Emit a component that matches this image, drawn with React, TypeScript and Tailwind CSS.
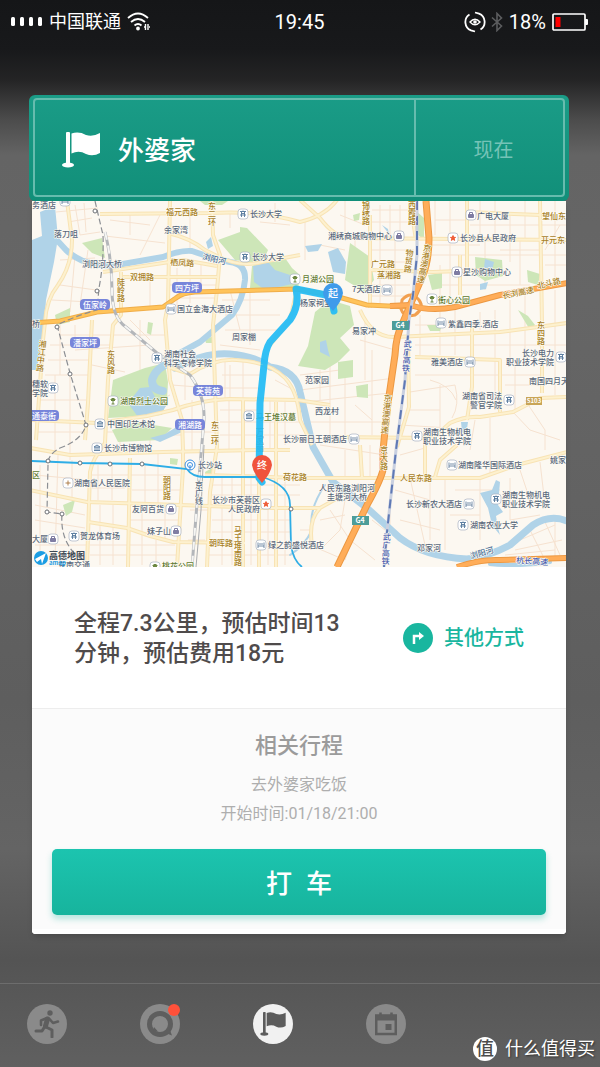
import { FC, ReactNode } from "react";

type Tone = "poi" | "road" | "park" | "water" | "rail";

interface Label {
  x: number;
  y: number;
  text: string;
  tone?: Tone;
  rotate?: number;
}

const toneFill: Record<Tone, string> = {
  poi: "#5a687b",
  road: "#a8801f",
  park: "#5f7a33",
  water: "#4a6f96",
  rail: "#4b5fae",
};

const labels: Label[] = [
  { x: 32, y: 208, text: "务酒店" },
  { x: 54, y: 237, text: "落刀咀" },
  { x: 164, y: 233, text: "余家湾" },
  { x: 250, y: 217, text: "长沙大学" },
  { x: 252, y: 260, text: "长沙大学" },
  { x: 166, y: 215, text: "福元西路", tone: "road" },
  { x: 82, y: 267, text: "浏阳河大桥" },
  { x: 170, y: 265, text: "栖凤路", tone: "road", rotate: 4 },
  { x: 130, y: 280, text: "双拥路", tone: "road" },
  { x: 202, y: 259, text: "浏阳河", tone: "water", rotate: 14 },
  { x: 177, y: 312, text: "国立金海大酒店" },
  { x: 302, y: 282, text: "月湖公园", tone: "park" },
  { x: 300, y: 306, text: "杨家祠堂" },
  { x: 328, y: 239, text: "湘绣商城购物中心" },
  { x: 477, y: 219, text: "广电大厦" },
  { x: 460, y: 241, text: "长沙县人民政府" },
  { x: 542, y: 219, text: "望仙东", tone: "road" },
  { x: 541, y: 243, text: "开元东", tone: "road" },
  { x: 371, y: 267, text: "广元路", tone: "road" },
  { x: 377, y: 278, text: "蒸湘路", tone: "road" },
  { x: 352, y: 292, text: "7天酒店" },
  { x: 463, y: 275, text: "星沙购物中心" },
  { x: 438, y: 303, text: "街心公园", tone: "park" },
  { x: 503, y: 299, text: "长浏高速", tone: "road", rotate: -12 },
  { x: 538, y: 289, text: "北斗路", tone: "road", rotate: -14 },
  { x: 448, y: 327, text: "紫鑫四季.酒店" },
  { x: 352, y: 334, text: "易家冲" },
  { x: 305, y: 383, text: "范家园" },
  { x: 315, y: 414, text: "西龙村" },
  { x: 431, y: 365, text: "雅美酒店" },
  { x: 522, y: 356, text: "长沙电力" },
  { x: 506, y: 365, text: "职业技术学院" },
  { x: 529, y: 384, text: "南国四月天" },
  { x: 462, y: 399, text: "湖南省司法" },
  { x: 470, y: 408, text: "警官学院" },
  { x: 423, y: 435, text: "湖南生物机电" },
  { x: 423, y: 444, text: "职业技术学院" },
  { x: 283, y: 442, text: "长沙丽日王朝酒店" },
  { x: 32, y: 327, text: "桥" },
  { x: 232, y: 340, text: "周家棚" },
  { x: 164, y: 357, text: "湖南社会" },
  { x: 164, y: 366, text: "科学专修学院" },
  { x: 32, y: 387, text: "穗软" },
  { x: 32, y: 396, text: "学院" },
  { x: 120, y: 404, text: "湖南烈士公园", tone: "park" },
  { x: 107, y: 427, text: "中国印艺术馆" },
  { x: 104, y: 451, text: "长沙市博物馆" },
  { x: 256, y: 420, text: "马王堆汉墓", tone: "park" },
  { x: 198, y: 468, text: "长沙站" },
  { x: 74, y: 486, text: "湖南省人民医院" },
  { x: 32, y: 478, text: "区", tone: "park" },
  { x: 283, y: 480, text: "荷花路", tone: "road" },
  { x: 212, y: 503, text: "长沙市芙蓉区" },
  { x: 228, y: 512, text: "人民政府" },
  { x: 132, y: 512, text: "友阿百货" },
  { x: 147, y: 534, text: "妹子山" },
  { x: 80, y: 539, text: "贺龙体育场" },
  { x: 32, y: 542, text: "大厦" },
  { x: 209, y: 546, text: "朝晖路", tone: "road" },
  { x: 268, y: 548, text: "绿之韵盛悦酒店" },
  { x: 162, y: 569, text: "桃花公园", tone: "park" },
  { x: 58, y: 568, text: "东南交通" },
  { x: 458, y: 468, text: "湖南隆华国际酒店" },
  { x: 550, y: 463, text: "姚家" },
  { x: 400, y: 481, text: "人民东路", tone: "road" },
  { x: 319, y: 491, text: "人民东路浏阳河" },
  { x: 327, y: 500, text: "圭塘河大桥" },
  { x: 406, y: 507, text: "长沙新农大酒店" },
  { x: 502, y: 498, text: "湖南生物机电" },
  { x: 502, y: 507, text: "职业技术学院" },
  { x: 470, y: 528, text: "湖南农业大学" },
  { x: 417, y: 551, text: "邓家河" },
  { x: 471, y: 559, text: "浏阳河", tone: "water", rotate: -16 },
  { x: 516, y: 563, text: "杭长高速", tone: "rail", rotate: 4 },
];

// street names that run down the road
const columns: Label[] = [
  { text: "东二环", x: 212, y: 202 },
  { text: "陡岭路", x: 121, y: 278 },
  { text: "锦绣路", x: 366, y: 201 },
  { text: "西霞路", x: 412, y: 201 },
  { text: "物贸路", x: 410, y: 249, rotate: 6 },
  { text: "京港澳高速", x: 428, y: 244, rotate: 11 },
  { text: "湘江中路", x: 43, y: 340, rotate: 6 },
  { text: "东风路", x: 111, y: 350 },
  { text: "东二环", x: 215, y: 421 },
  { text: "东四路", x: 541, y: 321 },
  { text: "武广高铁", x: 408, y: 340, rotate: 4, tone: "rail" },
  { text: "京港澳高速", x: 388, y: 394, rotate: 5 },
  { text: "京大路", x: 384, y: 446 },
  { text: "朝阳路", x: 167, y: 476 },
  { text: "京广线", x: 199, y: 481, tone: "poi" },
  { text: "马王堆南路", x: 238, y: 526 },
  { text: "武广高铁", x: 387, y: 533, rotate: 3, tone: "rail" },
  { text: "万家丽", x: 260, y: 428 },
];

const districts = [
  { x: 187, y: 288, text: "四方坪" },
  { x: 95, y: 305, text: "伍家岭" },
  { x: 85, y: 343, text: "潘家坪" },
  { x: 208, y: 391, text: "芙蓉苑" },
  { x: 190, y: 425, text: "湘湖路" },
  { x: 44, y: 416, text: "通泰街" },
];

type Kind = "school" | "bed" | "tree" | "shop" | "star" | "museum" | "cross";

const pois: { x: number; y: number; kind: Kind }[] = [
  { x: 243, y: 214, kind: "school" },
  { x: 245, y: 257, kind: "school" },
  { x: 65, y: 201, kind: "bed" },
  { x: 171, y: 309, kind: "bed" },
  { x: 295, y: 279, kind: "tree" },
  { x: 399, y: 236, kind: "shop" },
  { x: 471, y: 215, kind: "shop" },
  { x: 453, y: 238, kind: "star" },
  { x: 457, y: 272, kind: "shop" },
  { x: 387, y: 290, kind: "bed" },
  { x: 432, y: 299, kind: "tree" },
  { x: 441, y: 323, kind: "bed" },
  { x: 157, y: 358, kind: "school" },
  { x: 53, y: 388, kind: "school" },
  { x: 113, y: 401, kind: "tree" },
  { x: 100, y: 424, kind: "museum" },
  { x: 97, y: 448, kind: "museum" },
  { x: 249, y: 416, kind: "museum" },
  { x: 470, y: 362, kind: "bed" },
  { x: 561, y: 357, kind: "school" },
  { x: 509, y: 400, kind: "school" },
  { x: 417, y: 436, kind: "school" },
  { x: 354, y: 439, kind: "bed" },
  { x: 68, y: 483, kind: "cross" },
  { x: 266, y: 504, kind: "star" },
  { x: 171, y: 509, kind: "shop" },
  { x: 176, y: 531, kind: "shop" },
  { x: 74, y: 536, kind: "school" },
  { x: 53, y: 539, kind: "shop" },
  { x: 261, y: 545, kind: "bed" },
  { x: 155, y: 567, kind: "tree" },
  { x: 452, y: 465, kind: "bed" },
  { x: 469, y: 504, kind: "bed" },
  { x: 496, y: 499, kind: "school" },
  { x: 463, y: 525, kind: "school" },
];

const kindPath: Record<Kind, string> = {
  school: "M-3 -2.5H3M-2 -.5H2M-3 1H3M-1.5 -2.5V3M1.5 -2.5V3M0 -3.5V-2",
  bed: "M-3 -2.5V3M3 -2.5V3M-3 1H3M-2 -1H2",
  tree: "M0 0V3M-1.5 3H1.5M-2.5 -1.5H2.5M-2 -.5H2M-1.5 -2.5H1.5",
  shop: "M-2.5 -.5H2.5V2.5H-2.5ZM-2 .5H2M-2 1.5H2M-1.5 -.5V-2.5H1.5V-.5",
  star: "M0 -2.5L.8 -.7L2.6 -.6L1.2 .6L1.7 2.4L0 1.4L-1.7 2.4L-1.2 .6L-2.6 -.6L-.8 -.7Z",
  museum: "M-3 -1L0 -3L3 -1ZM-2 -1V2M0 -1V2M2 -1V2M-3 2.5H3",
  cross: "M0 -2.5V2.5M-2.5 0H2.5",
};

const kindColor: Record<Kind, string> = {
  school: "#56789c",
  bed: "#66819f",
  tree: "#5b7a2c",
  shop: "#716e98",
  star: "#ee5a35",
  museum: "#56789c",
  cross: "#a8743c",
};

const mainRoads = [
  "M100 214L210 213Q260 210 300 222Q325 216 337 200",
  "M300 200L320 218Q335 238 350 238L567 240",
  "M170 201L168 305L165 320L170 380L182 420L183 450V468L177 567",
  "M212 201L213 235L220 255L217 290L213 325L217 447L210 492L207 567",
  "M103 272L163 263L183 260L217 266",
  "M123 277H217",
  "M168 233Q190 238 205 250L217 256Q240 268 262 262L300 255",
  "M67 201L72 240Q72 265 58 285Q46 300 45 322L43 340L40 385L36 440",
  "M121 272V315L113 325L108 380L105 443Q92 460 90 472L87 567",
  "M92 320L88 403L85 440",
  "M30 420L97 423L147 416L173 410Q200 400 230 399L297 400L330 405",
  "M168 367L190 374Q215 358 237 360Q270 362 285 378Q298 392 300 420L312 445",
  "M30 490L87 502L180 505L260 508L320 508L345 494",
  "M30 448L70 455L163 452L257 450L290 450",
  "M130 458L128 567",
  "M88 522L127 528L150 536L173 542L245 543",
  "M205 475L300 478L480 478L517 465L567 452",
  "M243 400V567",
  "M259 478V567",
  "M276 402V567",
  "M360 445L362 478",
  "M425 430V475",
  "M457 445L440 460L435 477",
  "M408 340L409 407L397 447",
  "M330 437L433 438L450 423Q465 416 480 417L513 412L540 398L567 397",
  "M415 357L500 360V412",
  "M472 325V387L467 420",
  "M540 201L542 325V393",
  "M460 255V295",
  "M360 310Q372 338 395 337L500 332L567 323",
  "M370 215V308",
  "M410 201L416 240",
  "M370 270L433 272L487 270",
  "M467 201V275M467 212L540 215",
  "M320 508Q308 520 312 545",
  "M297 289L290 320L270 345",
];

const minorRoads = [
  "M75 205L80 235L100 232M68 222L92 218M56 212L98 208M84 203L86 232M60 260L95 258",
  "M60 285L96 290M52 300L90 302M75 255L70 312M88 250L80 305",
  "M140 255L160 215M105 236L165 243M110 220L150 225M130 214V235M190 214V250",
  "M177 268V306M190 262V303M201 264V290M168 285H217M172 298H215M150 277V308",
  "M230 214V228M260 222L290 225M275 203V222M230 290L240 330M250 292V345M225 330H285",
  "M222 300H270M225 315H280M220 345L260 350M60 335H165M75 350L150 345M92 365L125 372",
  "M50 345H110M48 360H90M45 375H88M60 325V375M75 325V345M130 320L150 340M140 320V400",
  "M40 400H86M38 432H84M55 375V450M70 372V460M105 432H180M120 420V455M150 418V452",
  "M170 395L160 400M172 385L210 388M185 375V400M225 360V400M230 365V398M243 362V400",
  "M222 375H260M222 388H258M220 410H258M220 422H300M220 435H300M229 400V452M270 400V452",
  "M285 402V445M192 400V450M172 432H215M150 435H182M275 380L290 388",
  "M40 465V560M58 455L55 560M72 460V500M98 465V500M112 463V500M145 465V503M158 453V503",
  "M92 475H128M92 488H125M130 475H180M132 490H182M35 475L88 480M35 505L85 515",
  "M35 520L85 528M35 545H88M100 505V565M113 505V565M142 508V565M156 540V565M90 545H175M90 555H176",
  "M130 520H180M165 505V540M212 485H300M212 495H300M212 520H290M212 532H290M207 555H295",
  "M222 475V565M232 475V565M251 478V565M268 510V565M285 480V565M190 510H208M188 540H205",
  "M305 220V260M320 245L345 250M340 215L365 225M345 201V240M355 238V250M380 205V238M390 205V238M400 205V240",
  "M372 210H410M372 222H410M372 250H414M372 262H412M372 285H410M372 296H405M380 240V305M395 240V305",
  "M435 201V235M450 201V238M480 201V240M495 201V240M510 216V262M525 201V240M555 201V285",
  "M435 220H465M470 225H567M430 255H567M440 265V300M450 240V300M485 240V290M520 240V285",
  "M430 245H480M500 250H540M435 285H530M545 265H567M545 250L560 225M480 312V330M495 310V400",
  "M420 315V355M440 312V355M455 310V355M510 300V358M525 295V355M555 290V395M415 345H567M415 325H440",
  "M415 375H540M505 385H545M410 392L455 385Q460 405 452 418M430 380Q450 385 456 400M515 362V410",
  "M300 390L395 378M305 402L390 393M300 375L340 370M320 370V400M330 365V435M345 362V437M372 350V435",
  "M310 422H385M355 405L372 420M320 445L385 455M315 330V350M360 340L395 350M365 320V380",
  "M410 410H440M400 425L450 428M440 385V430M475 420L470 450M490 418V475M513 412L530 430L560 440",
  "M525 400L545 430V450M400 455L425 448M335 480L360 500M345 450V478M370 445V478",
  "M430 478V540M445 478V550M455 490H500M450 515H480M480 480V540M395 490L430 500M400 520L440 530M410 478L425 545",
  "M390 500V540M372 520L385 530M345 500L340 530L320 550M330 510L350 540L375 560M310 545L345 560",
  "M320 520L345 515M355 530L345 560M300 530H312M520 470L530 500M510 478V520L540 515M540 462L545 505",
  "M520 540L555 525M530 530L545 560M545 522L560 555M515 550L562 540M505 555L555 550M555 520V560",
];

const greens = [
  "M82 243L102 238L105 258L92 253Z",
  "M218 240L240 232L240 227L247 228L268 250L262 264L235 260Z",
  "M252 266L283 255L292 268L300 275L298 290L250 288Z",
  "M350 243L370 257L374 280L365 292L345 280Z",
  "M315 312L330 300L350 306L354 325L340 338L350 350L338 362L325 370L298 366L308 346Z",
  "M338 362L353 360V377L338 379Z",
  "M356 386L368 384V398L357 397Z",
  "M475 257L502 260L503 276L485 281L476 275Z",
  "M428 275L442 273V288L432 290Z",
  "M113 380L145 368L165 363L168 382L167 400L162 415L108 418Z",
  "M112 430L135 422L172 428L160 440L118 442Z",
  "M200 201H228L222 205H205Z",
  "M527 270L540 274L538 285L528 282Z",
  "M518 310L528 316L535 325L530 330Z",
  "M353 215L360 213L359 220L354 221Z",
  "M415 210L424 218V240L418 235Z",
  "M63 505L75 500L72 512L66 516Z",
  "M170 458L178 459L177 465L170 464Z",
  "M205 472L212 468L213 475L206 476Z",
  "M148 322L153 323L151 335L147 333Z",
  "M205 340L213 336L215 343L206 343Z",
  "M427 325L442 325L440 331L430 331Z",
  "M55 315L70 308V322L57 325Z",
];

const lakes = [
  "M32 240L42 236L40 212L55 206L58 238L54 262L46 300L43 345L36 370H32Z",
  "M253 266L268 262L275 270L290 275L292 284L265 290L254 282Z",
  "M328 252L338 248L346 262L345 274L333 272Z",
  "M206 242L211 237L213 246L208 249Z",
  "M128 403L140 388L150 387L156 399L168 403L160 415L138 417Z",
  "M305 246L322 244L318 251L308 252Z",
  "M320 342L326 340L328 350L330 357L320 352Z",
  "M382 225L388 229L389 234Z",
  "M485 259L494 262L492 271L484 268Z",
  "M480 284L488 282L486 289L480 290Z",
  "M150 438L165 434L180 425L182 432L160 442Z",
  "M461 422H468L466 435L462 432Z",
  "M480 493L492 490L496 480L500 482L498 505L503 512L496 516L498 528L500 535L492 525L488 508Z",
];

const orangeRoad =
  "M32 323L60 321L97 312L163 307L176 298Q182 293 195 292L297 289L335 296L367 305L410 307";
const expressway =
  "M426 201L429 238Q429 260 423 275L403 322Q396 335 395 355L388 403L383 450V470Q380 482 367 505L337 567";
const eastExpressway =
  "M390 306L410 305Q430 312 455 307L500 295L567 283M457 567Q480 559 500 560L567 558";
const highSpeedRail = "M417 201V255L413 295L409 320L405 380L396 450L387 532L384 567";
const railway =
  "M105 232Q112 260 112 290Q112 318 126 327L157 353L190 375Q205 395 204 420L199 478L192 567";

const stops = [
  [95, 211], [97, 291], [57, 327], [70, 374], [86, 425], [47, 512], [62, 514],
  [48, 461], [80, 463], [110, 464], [142, 464], [291, 509],
];

const mapFont = '"Noto Sans CJK SC", "Noto Sans", sans-serif';

const Pin: FC<{ x: number; y: number; fill: string; text: string }> = ({ x, y, fill, text }) => (
  <g>
    <path
      d={`M${x - 10} ${y}A10 10 0 1 1 ${x + 10} ${y}Q${x + 9} ${y + 8} ${x} ${y + 18}Q${x - 9} ${y + 8} ${x - 10} ${y}Z`}
      fill={fill}
    />
    <text x={x} y={y + 4} fontSize="10" fontWeight="500" fill="#fff" textAnchor="middle">
      {text}
    </text>
  </g>
);

const RouteMap = () => (
  <svg
    viewBox="32 201 534 366"
    className="block w-full bg-[#fcf8f1]"
    style={{ fontFamily: mapFont }}
    role="img"
  >
    {/* land and water */}
    {minorRoads.map((d) => (
      <path key={d} d={d} fill="none" stroke="#f6e2d0" strokeWidth="1" />
    ))}
    {greens.map((d) => (
      <path key={d} d={d} fill="#cde6b8" />
    ))}
    {lakes.map((d) => (
      <path key={d} d={d} fill="#b0d3e8" />
    ))}
    <g fill="none" stroke="#b0d3e8" strokeLinejoin="round" strokeLinecap="round">
      <path
        strokeWidth="6"
        d="M55 238L66 250Q85 268 117 265L163 257Q180 250 192 251L210 257L230 262Q246 264 245 280Q243 300 232 315L200 342L180 353"
      />
      <path strokeWidth="8" d="M172 362Q155 368 152 380Q152 390 163 391" />
      <path
        strokeWidth="7"
        d="M175 368Q205 352 230 354Q255 356 270 367Q296 370 300 392L313 447L333 482L367 508L400 538Q425 557 467 559Q490 556 510 545L533 525Q550 514 567 521"
      />
      <path strokeWidth="2" d="M325 485Q308 510 312 530Q305 545 290 555" />
      <path strokeWidth="4" d="M490 564Q520 567 550 562" />
    </g>

    {/* roads */}
    <g fill="none" strokeLinejoin="round">
      {mainRoads.map((d) => (
        <path key={d} d={d} stroke="#f8e3b4" strokeWidth="4" />
      ))}
      {mainRoads.map((d) => (
        <path key={d} d={d} stroke="#fdf1cf" strokeWidth="2" />
      ))}
      <path d={orangeRoad} stroke="#f0ae4a" strokeWidth="5" />
      <path d={orangeRoad} stroke="#ffc35a" strokeWidth="3" />
      <path d={eastExpressway} stroke="#ec9842" strokeWidth="6" />
      <path
        d="M402 300Q411 290 419 300Q425 308 415 315Q404 318 401 309Z"
        stroke="#f2a050"
        strokeWidth="3"
      />
      <path d={expressway} stroke="#ec9842" strokeWidth="7" />
      <path d={eastExpressway} stroke="#ffad59" strokeWidth="4" />
      <path d={expressway} stroke="#ffad59" strokeWidth="5" />
    </g>

    {/* railways */}
    <g fill="none">
      <path d={highSpeedRail} stroke="#c9d0e0" strokeWidth="3" />
      <path d={highSpeedRail} stroke="#5f79b5" strokeWidth="2" strokeDasharray="9 6" />
      <path
        d="M95 201L103 235Q104 262 99 288L97 310Q75 316 57 325L70 373L86 425Q82 440 60 448Q47 455 48 465L47 512L62 514Q60 540 77 556"
        stroke="#8c8f94"
        strokeWidth="1.2"
        strokeDasharray="6 3"
      />
      <path d={railway} stroke="#b3b6ba" strokeWidth="3" />
      <path d={railway} stroke="#f5f5f3" strokeWidth="2" strokeDasharray="8 6" />
      <path d="M204 445L201 510L196 567" stroke="#a9acb0" strokeWidth="1" />
      <path
        d="M32 461L80 463L142 464L187 469Q192 477 205 477H262Q290 485 290 505L291 545Q293 560 302 567"
        stroke="#2eade6"
        strokeWidth="1.8"
      />
    </g>
    {stops.map(([x, y]) => (
      <circle key={`${x}-${y}`} cx={x} cy={y} r="2" fill="#fff" stroke="#6d7075" />
    ))}

    {/* icons of the places */}
    {pois.map((p) => (
      <g key={`${p.x}-${p.y}`} transform={`translate(${p.x} ${p.y})`}>
        <rect x="-5" y="-5" width="10" height="10" rx="3" fill="#fff" stroke="#a9b3c1" strokeWidth=".7" />
        <path
          d={kindPath[p.kind]}
          fill={p.kind === "star" ? kindColor.star : "none"}
          stroke={kindColor[p.kind]}
          strokeWidth=".9"
        />
      </g>
    ))}
    <g fill="none" stroke="#3a8ee0">
      <circle cx="190" cy="465" r="5" fill="#fff" />
      <circle cx="190" cy="465" r="2.5" />
      <path d="M190 465V470" />
    </g>

    {/* names */}
    <g fontSize="8" fontWeight="500" stroke="#fffdf6" strokeWidth="1.2" paintOrder="stroke" strokeLinejoin="round">
      {labels.map((l) => (
        <text
          key={`${l.x}-${l.y}`}
          x={l.x}
          y={l.y}
          fill={toneFill[l.tone || "poi"]}
          transform={l.rotate ? `rotate(${l.rotate} ${l.x} ${l.y})` : undefined}
        >
          {l.text}
        </text>
      ))}
      {columns.map((c) => (
        <text
          key={`${c.x}-${c.y}`}
          x={c.x}
          y={c.y}
          className="[writing-mode:vertical-rl]"
          fill={toneFill[c.tone || "road"]}
          transform={c.rotate ? `rotate(${c.rotate} ${c.x} ${c.y})` : undefined}
        >
          {c.text}
        </text>
      ))}
    </g>
    {districts.map((d) => (
      <g key={d.text}>
        <rect x={d.x - 15} y={d.y - 6} width="30" height="11" rx="4" fill="#7785da" />
        <text x={d.x} y={d.y + 3} fontSize="8" fontWeight="500" fill="#fff" textAnchor="middle">
          {d.text}
        </text>
      </g>
    ))}
    {[
      [400, 326],
      [360, 521],
    ].map(([x, y]) => (
      <g key={x}>
        <rect x={x - 8} y={y - 5} width="17" height="9" fill="#4d9d99" />
        <text x={x} y={y + 2} fontSize="7" fontWeight="700" fill="#fff" textAnchor="middle">
          G4
        </text>
      </g>
    ))}
    <rect x="526" y="397" width="16" height="8" fill="#c9a557" />
    <text x="534" y="403" fontSize="6" fontWeight="700" fill="#fff" textAnchor="middle">
      S103
    </text>

    {/* route */}
    <path
      d="M334 311L331 296L296 289Q300 305 290 320L270 342Q265 350 264 365L260 403L259 478L262 482"
      fill="none"
      stroke="#22bbf5"
      strokeOpacity=".93"
      strokeWidth="7"
      strokeLinejoin="round"
      strokeLinecap="round"
    />
    <Pin x={333} y={293} fill="#3f9bea" text="起" />
    <Pin x={262} y={465} fill="#f0533c" text="终" />

    {/* map logo */}
    <circle cx="41" cy="558" r="7" fill="#1c9de3" />
    <path d="M35 559L46 553L42 564L41 559L37 562Z" fill="#fff" />
    <text x="49" y="559" fontSize="9" fontWeight="700" fill="#3e4a55">
      高德地图
    </text>
    <text x="49" y="565" fontSize="6" fontWeight="700" fill="#1c9de3">
      amap
    </text>
  </svg>
);

const FlagIcon: FC<{ className?: string }> = ({ className }) => (
  <svg viewBox="0 0 38 36" className={className} fill="currentColor">
    <rect x="4" y="0" width="4" height="34" rx="1" />
    <ellipse cx="6" cy="33" rx="6" ry="2.6" />
    <path d="M9.500 1.500Q17 -1 24 3Q31 5 38 1V21Q31 25 24 22Q17 18 9.500 21.500Z" />
  </svg>
);

const StatusBar = () => (
  <div className="grid h-[43px] grid-cols-3 items-center pr-3 pl-[11px] text-xl text-white">
    <div className="flex items-center">
      <svg viewBox="0 0 32 10" className="h-[10px] w-8 shrink-0" fill="currentColor">
        <rect x="0" width="4" height="9" rx="1.500" />
        <rect x="9" width="4" height="9" rx="1.500" />
        <rect x="18" width="4" height="9" rx="1.500" />
        <rect x="27" width="4" height="9" rx="1.500" />
      </svg>
      <span className="ml-[6px] text-lg whitespace-nowrap">中国联通</span>
      <svg viewBox="0 0 24 20" className="ml-[6px] h-5 w-6 shrink-0" fill="none" stroke="currentColor" strokeWidth="1.800">
        <path d="M1 6Q11 -3 21 6M4 10Q11 4 18 10M7.500 13.500Q11 10.500 14.500 13.500" />
        <circle cx="11" cy="16.500" r="1" fill="currentColor" />
        <path d="M18.500 12V18M21 12V18M17 15H18M22 15H23" strokeWidth="1.400" />
      </svg>
    </div>
    <div className="text-center">19:45</div>
    <div className="flex items-center justify-end">
      <svg viewBox="0 0 22 22" className="size-[22px] shrink-0" fill="none" stroke="currentColor" strokeWidth="1.800">
        <path d="M5.500 3.500A9 9 0 0 0 7 19.400L11 20.500M16.500 18.500A9 9 0 0 0 15 2.600L11 1.500" />
        <path d="M6 11Q11 5.500 16 11Q11 16.500 6 11Z" strokeWidth="1.400" />
        <circle cx="11" cy="11" r="1.800" fill="currentColor" stroke="none" />
      </svg>
      <svg viewBox="0 0 12 20" className="ml-[5px] h-5 w-3 shrink-0" fill="none" stroke="#5c5d5f" strokeWidth="1.600">
        <path d="M1 5.500L10.500 14L6 18.500V1.500L10.500 6L1 14.500" />
      </svg>
      <span className="mr-[6px] ml-[6px]">18%</span>
      <svg viewBox="0 0 36 18" className="h-[18px] w-9 shrink-0">
        <rect x="1" y="1" width="32" height="16" rx="1" fill="none" stroke="#fff" strokeWidth="1.700" />
        <rect x="33" y="6" width="3" height="6" rx="1" fill="#fff" />
        <rect x="3.500" y="4" width="5" height="10" fill="#f00" />
      </svg>
    </div>
  </div>
);

const NavButton: FC<{ label: string; active?: boolean; children: ReactNode }> = ({
  label,
  active,
  children,
}) => (
  <button
    aria-label={label}
    className={
      active
        ? "relative flex size-10 items-center justify-center rounded-full bg-[#f1f1f1] text-[#5c5c5c]"
        : "relative flex size-10 items-center justify-center rounded-full bg-[#8a8a8a] text-[#5e5e5e]"
    }
  >
    {children}
  </button>
);

const App = () => {
  return (
    <div
      lang="zh-CN"
      className="flex min-h-screen flex-col bg-[linear-gradient(180deg,#151618_0px,#18191b_50px,#242425_80px,#4c4c4c_120px,#646464_155px,#666666_300px,#5e5e5e_700px,#646464_850px,#545454_960px,#606060_1067px)] font-['Roboto','Noto_Sans_CJK_SC',sans-serif]"
    >
      <StatusBar />

      <main className="mt-[52px] pr-[31px] pl-[29px]">
        <header className="rounded-md bg-linear-to-b from-[#1a9c87] to-[#118f79] px-1 pt-[3px] pb-1">
          <div className="flex h-[99px] rounded-sm border-2 border-[#66bcae] text-white">
            <div className="flex grow items-center pt-1 pl-[27px]">
              <FlagIcon className="h-9 w-[38px]" />
              <h1 className="ml-[18px] pt-1 text-[26px] font-medium">外婆家</h1>
            </div>
            <button className="w-[149px] border-l-2 border-[#66bcae] pt-1 pl-2 text-xl text-[#75c3b7]">
              现在
            </button>
          </div>
        </header>

        <div className="mx-[3px] overflow-hidden rounded-b-[4px] bg-white shadow-md">
          <RouteMap />

          <section className="flex h-[142px] items-center justify-between border-b border-[#ededed] px-[42px]">
            <p className="w-[280px] pt-[3px] text-[23px] leading-[30px] font-medium text-[#4f4b4b]">
              全程7.3公里，预估时间13
              <br />
              分钟，预估费用18元
            </p>
            <button className="flex items-center gap-[11px] text-xl font-medium text-[#19b69f]">
              <span className="flex size-[30px] items-center justify-center rounded-full bg-[#19b69f]">
                <svg viewBox="0 0 14 14" className="size-[14px]" fill="none" stroke="#fff" strokeWidth="2.500">
                  <path d="M3 13V5H9" />
                  <path d="M8 1L13 5L8 9Z" fill="#fff" stroke="none" />
                </svg>
              </span>
              其他方式
            </button>
          </section>

          <section className="border-b-[5px] border-white bg-[#fbfbfb] px-5 pt-[21px] pb-[14px] text-center">
            <h2 className="text-[22px] leading-8 font-medium text-[#9b9b9b]">相关行程</h2>
            <p className="mt-2 text-base leading-[29px] text-[#aeaeae]">
              去外婆家吃饭
              <br />
              开始时间:01/18/21:00
            </p>
            <button className="mt-[21px] flex h-[66px] w-full items-center justify-center gap-[14px] rounded-[5px] bg-linear-to-b from-[#1cc4af] to-[#17b49d] pt-1 text-[26px] font-medium text-white shadow-[0_4px_6px_rgba(23,180,157,0.3)]">
              <span>打</span>
              <span>车</span>
            </button>
          </section>
        </div>
      </main>

      <footer className="mt-auto flex h-[84px] items-start justify-between border-t border-[#6d6d6d] pl-[27px]">
        <nav className="flex gap-[73px] pt-5">
          <NavButton label="运动">
            <svg viewBox="0 0 26 28" className="h-7 w-[26px]" fill="none" stroke="currentColor" strokeWidth="3" strokeLinecap="round" strokeLinejoin="round">
              <circle cx="16" cy="3" r="2.700" fill="currentColor" stroke="none" />
              <path d="M13.500 9L11.500 16" strokeWidth="5" />
              <path d="M13 8L7 10.500V15M15.500 9L19 13L24 11.500" strokeWidth="2.600" />
              <path d="M12 17L18 20V27M10.500 17L8 21H2" />
            </svg>
          </NavButton>
          <NavButton label="消息">
            <svg viewBox="0 0 28 28" className="size-7" fill="none" stroke="currentColor" strokeWidth="5">
              <circle cx="14" cy="14" r="10.500" />
              <path d="M19 23Q23 24 26 25.500Q25 22 23 19ZM7 21.500H12L8 17Z" fill="currentColor" stroke="none" />
            </svg>
            <span className="absolute top-0 right-0 size-3 rounded-full bg-[#ff513a]" />
          </NavButton>
          <NavButton label="行程" active>
            <FlagIcon className="h-6 w-[26px]" />
          </NavButton>
          <NavButton label="日历">
            <svg viewBox="0 0 22 24" className="h-6 w-[22px]" fill="none" stroke="currentColor" strokeWidth="2.500">
              <rect x="1.250" y="3.500" width="19.500" height="18.500" />
              <path d="M1 6H21" strokeWidth="5" />
              <path d="M5.500 .5V4M16.500 .5V4" strokeWidth="2.500" />
              <path d="M10.500 12H16.500V18H10.500Z" fill="currentColor" stroke="none" />
            </svg>
          </NavButton>
        </nav>
        <div className="flex items-center gap-2 self-end pr-[5px] pb-[6px] text-lg leading-6 whitespace-nowrap text-white [text-shadow:1px_1px_2px_rgba(0,0,0,0.5)]">
          <span className="flex size-6 items-center justify-center rounded-full bg-white text-lg font-medium text-[#4c4c4c] [text-shadow:none]">
            值
          </span>
          什么值得买
        </div>
      </footer>
    </div>
  );
};

export default App;
